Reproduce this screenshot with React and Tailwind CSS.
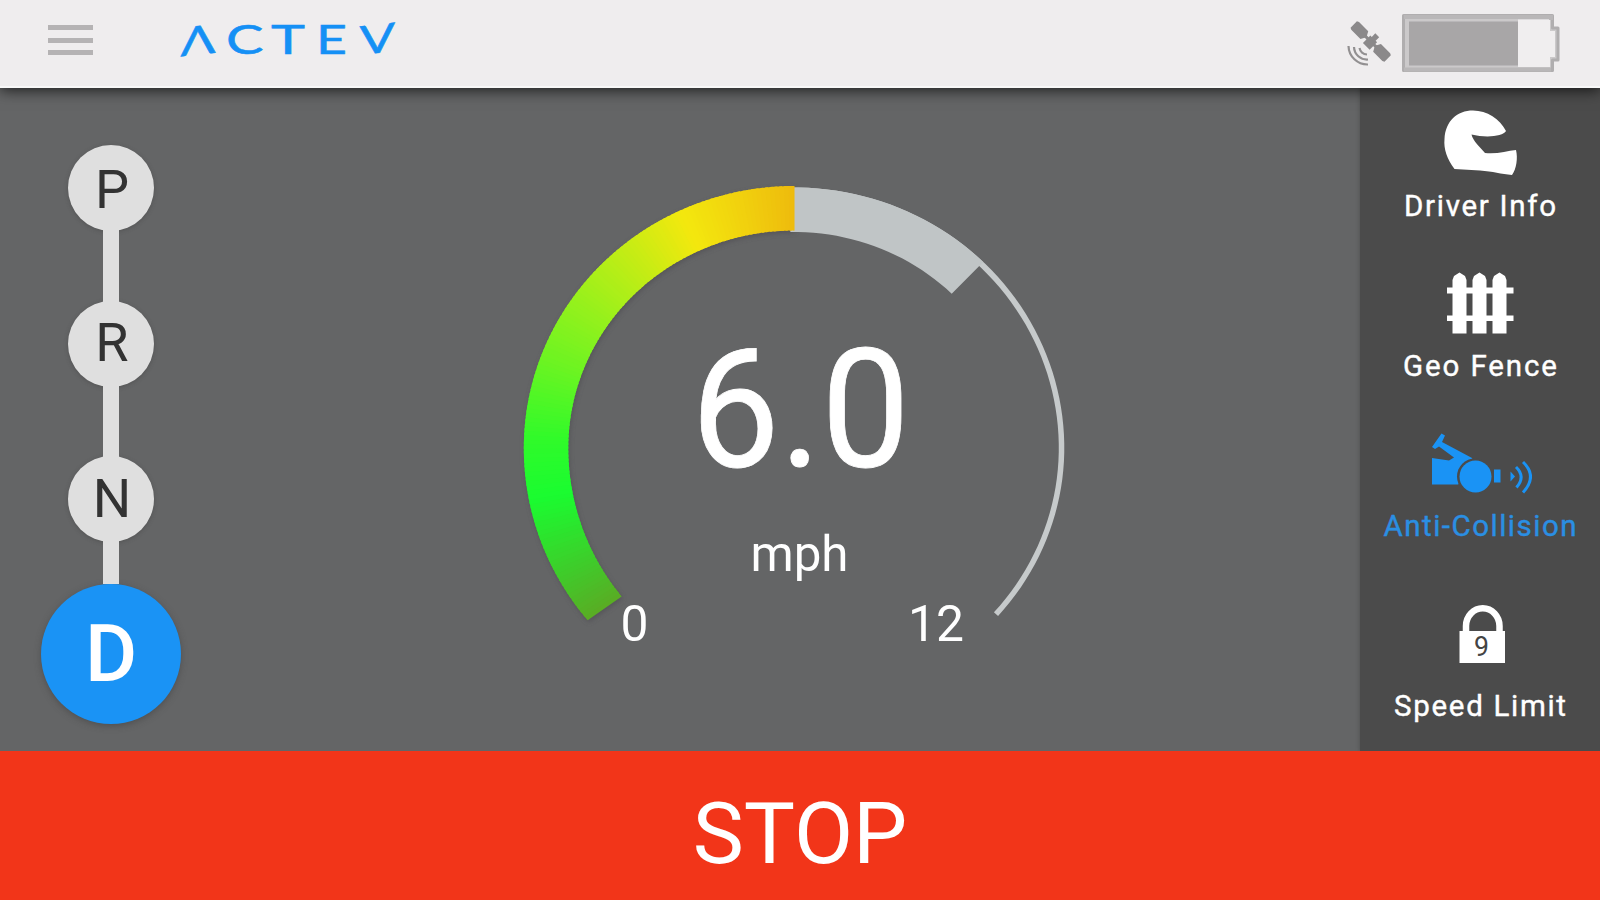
import React from "react";

const FONT = "font-['Roboto','Liberation_Sans',sans-serif]";

const CX = 794.3;
const CY = 448;

// Each ring edge has its own vertical radius above and below the centre line.
const COLOR_OUTER = { rx: 270.5, up: 262, down: 267 };
const COLOR_INNER = { rx: 226, up: 217.5, down: 230 };
const TRACK_OUTER = { rx: 270, up: 260.5, down: 256 };
const TRACK_INNER = { rx: 264.5, up: 254.5, down: 250.5 };
const SHADE_INNER = { rx: 225, up: 216, down: 216 };

function point(deg, e) {
  const a = (deg * Math.PI) / 180;
  const s = Math.sin(a);
  return `${(CX + e.rx * Math.cos(a)).toFixed(2)},${(CY + (s > 0 ? e.down : e.up) * s).toFixed(2)}`;
}

function band(a0, a1, outerEdge, innerEdge) {
  const steps = Math.max(2, Math.ceil((a1 - a0) / 2));
  const outer = [];
  const inner = [];
  for (let i = 0; i <= steps; i++) {
    const a = a0 + ((a1 - a0) * i) / steps;
    outer.push(point(a, outerEdge));
    inner.unshift(point(a, innerEdge));
  }
  return "M" + outer.concat(inner).join("L") + "Z";
}

const START = 139.8;

const STOPS = [
  [START, [90, 172, 36]],
  [150, [66, 200, 42]],
  [169, [26, 252, 48]],
  [182, [48, 250, 42]],
  [200, [108, 244, 34]],
  [217, [156, 240, 27]],
  [232, [200, 236, 20]],
  [245, [243, 232, 14]],
  [257, [241, 211, 14]],
  [270, [238, 187, 13]],
];

function colorAt(a) {
  for (let i = 1; i < STOPS.length; i++) {
    if (a <= STOPS[i][0]) {
      const [p, c] = STOPS[i - 1];
      const [q, d] = STOPS[i];
      const t = (a - p) / (q - p);
      return `rgb(${c.map((v, k) => Math.round(v + (d[k] - v) * t)).join(",")})`;
    }
  }
  return "rgb(238,187,13)";
}

const SLICES = Array.from({ length: 131 }, (_, i) => START + i);

function Gauge() {
  return (
    <svg width="1140" height="663" viewBox="220 88 1140 663" className={FONT}>
      <defs>
        <filter id="soft" x="-10%" y="-10%" width="120%" height="120%">
          <feGaussianBlur stdDeviation="2.5" />
        </filter>
      </defs>
      <path d={band(START, 270, COLOR_OUTER, COLOR_INNER)} fill="#4c4a50" opacity="0.6" filter="url(#soft)" transform="translate(1 2)" />
      <path d={band(269, 401, TRACK_OUTER, TRACK_INNER)} fill="#c6cacb" />
      <path d={band(269, 314.4, TRACK_OUTER, SHADE_INNER)} fill="#c0c5c6" />
      {SLICES.map((a) => (
        <path key={a} d={band(a, Math.min(a + 1.6, 270), COLOR_OUTER, COLOR_INNER)} fill={colorAt(a + 0.5)} />
      ))}
      <g fill="#fff">
        <text x="691" y="466" fontSize="165" textLength="219" lengthAdjust="spacingAndGlyphs" stroke="#fff" strokeWidth="0.8">6.0</text>
        <text x="750.5" y="571" fontSize="50" textLength="98" lengthAdjust="spacingAndGlyphs">mph</text>
        <text x="620.5" y="640.5" fontSize="50" textLength="28" lengthAdjust="spacingAndGlyphs">0</text>
        <text x="908" y="640.5" fontSize="50" textLength="56" lengthAdjust="spacingAndGlyphs">12</text>
      </g>
    </svg>
  );
}

function Logo() {
  return (
    <svg width="230" height="60" viewBox="170 10 230 60" aria-label="ACTEV" className="font-['Lato',sans-serif]">
      <g fill="#1590f5" stroke="#1590f5" strokeWidth="0.5" fontSize="40">
        <text transform="matrix(1 -0.11 0 1 180.500 56.500)" textLength="35" lengthAdjust="spacingAndGlyphs">Λ</text>
        <text x="226" y="53.500" textLength="37.500" lengthAdjust="spacingAndGlyphs">C</text>
        <text x="271" y="53.500" textLength="34" lengthAdjust="spacingAndGlyphs">T</text>
        <text x="316" y="53.500" textLength="31" lengthAdjust="spacingAndGlyphs">E</text>
        <text transform="matrix(1 -0.11 0 1 359.500 55)" textLength="35.500" lengthAdjust="spacingAndGlyphs">V</text>
      </g>
    </svg>
  );
}

function Satellite() {
  return (
    <svg width="46" height="48" viewBox="1346 21 46 48">
      <g transform="translate(1370.700 41.500) rotate(45)" fill="#8b898a">
        <path d="M-24 -4.500L-22 -5.500H-9L-6 0L-9 5.500H-22L-24 4.500ZM24 -4.500L22 -5.500H9L6 0L9 5.500H22L24 4.500Z" />
        <path d="M-4.500 -4H-2.500V-9H3V-4H5V6.500H-4.500Z" />
        <rect x="-8" y="-1.500" width="16" height="3" />
      </g>
      <g fill="none" stroke="#929091" strokeWidth="2.2">
        <path d="M1348.500 46A19 19 0 0 0 1368 64.500" />
        <path d="M1354 47A13 13 0 0 0 1368 59.500" />
        <path d="M1359.500 48A8 8 0 0 0 1367 54.500" />
      </g>
    </svg>
  );
}

function Battery() {
  return (
    <svg width="162" height="62" viewBox="1400 12 162 62">
      <path d="M1403.500 15.500H1552.500V28H1558V60H1552.500V70.500H1403.500Z" fill="#cbc9ca" stroke="#b0aeaf" strokeWidth="3" strokeLinejoin="round" />
      <path d="M1518 19.500H1550V31H1555V57H1550V67H1518Z" fill="#f0eeef" />
      <path d="M1404 17H1551V20M1404 69.500H1551" stroke="#b9b7b8" strokeWidth="4" fill="none" />
      <rect x="1409" y="21.500" width="109" height="44" fill="#a8a6a7" />
    </svg>
  );
}

function Helmet() {
  return (
    <svg width="80" height="70" viewBox="1440 108 80 70">
      <path d="M1454.500 169C1447 159 1443.500 149 1444.500 139C1445.500 121 1457 110.500 1473 110.500C1487 110.500 1500 119 1506 131C1503 136.500 1486 138 1471.500 134.500C1473 141 1480 147 1485 153C1496 154.500 1507 151 1516 150C1518 158 1516.500 169 1512 175C1501 174 1493 171.500 1480 170.500Z" fill="#fff" />
    </svg>
  );
}

function Fence() {
  return (
    <svg width="70" height="66" viewBox="1445 270 70 66">
      <g fill="#fff">
        <path d="M1447 287.500H1513.500V293.500H1447ZM1447 315.500H1513.500V321H1447Z" />
        <path d="M1452.500 333.500V280L1454 276L1459.500 272.500L1465 276L1466.500 280V333.500ZM1472.500 333.500V280L1474 276L1479.500 272.500L1485 276L1486.500 280V333.500ZM1492.500 333.500V280L1494 276L1499.500 272.500L1505 276L1506.500 280V333.500Z" />
      </g>
    </svg>
  );
}

function Collision() {
  return (
    <svg width="104" height="62" viewBox="1428 431 104 62">
      <g fill="#1a93f5">
        <path d="M1432 457L1449 459.500L1454 456.500L1439 445.500L1435 448L1432 446L1441.500 432.500L1445 434.500L1442 441L1472 457L1476 470L1458 483.500H1432Z" />
        <circle cx="1475" cy="475.500" r="18" fill="#4b4b4b" />
        <circle cx="1475.500" cy="475.500" r="16" />
        <rect x="1494" y="468.500" width="6.500" height="13" />
        <path d="M1510.500 470.500L1515 475.500L1510.500 480.500Z" />
      </g>
      <g fill="none" stroke="#1a93f5" strokeWidth="3">
        <path d="M1516 466Q1526 475.500 1516.500 486.500" />
        <path d="M1523 461Q1538 475 1523 491.500" />
      </g>
    </svg>
  );
}

function Lock() {
  return (
    <svg width="50" height="62" viewBox="1455 602 50 62" className={FONT}>
      <path d="M1466 632V626A16.700 17.700 0 0 1 1499.500 626V632" fill="none" stroke="#fff" strokeWidth="6.500" />
      <rect x="1459.500" y="631" width="46" height="32" fill="#fff" />
      <text x="1481.500" y="655.500" textAnchor="middle" fontSize="27" fill="#444" textLength="15" lengthAdjust="spacingAndGlyphs">9</text>
    </svg>
  );
}

function MenuItem({ icon, label, top, height, width, active }) {
  return (
    <button className={`flex w-full flex-col items-center justify-between ${top} ${height}`}>
      {icon}
      <svg width="220" height="34" className={`${FONT} shrink-0`}>
        <text x="110" y="25.500" textAnchor="middle" fontSize="29.500" textLength={width} fill={active ? "#2a8fe3" : "#fff"} stroke={active ? "#2a8fe3" : "#fff"} strokeWidth="0.4">{label}</text>
      </svg>
    </button>
  );
}

function Gear({ children, pad }) {
  return (
    <div className={`flex size-[86px] items-center justify-center rounded-full bg-[#dfdfdf] pl-0.5 text-[54px] leading-none text-[#333] shadow-[0_1px_4px_rgba(60,60,60,0.4)] ${pad}`}>
      {children}
    </div>
  );
}

function Link({ height }) {
  return <div className={`z-[1] -my-1 w-[16px] bg-[#dfdfdf] ${height}`} />;
}

export default function App() {
  return (
    <div className={`flex h-[900px] w-[1600px] flex-col overflow-hidden bg-[#646566] ${FONT}`}>
      <header className="z-10 flex h-[88px] shrink-0 items-start border-b-2 border-[#f8f8f8] bg-[#efedee] shadow-[0_2px_14px_rgba(0,0,0,0.75)]">
        <button className="mt-[25px] ml-[48px] flex w-[45px] flex-col gap-[7.5px]" aria-label="Menu">
          <span className="h-[5px] w-full bg-[#b5b3b4]" />
          <span className="h-[5px] w-full bg-[#b5b3b4]" />
          <span className="h-[5px] w-full bg-[#b5b3b4]" />
        </button>
        <div className="mt-[10px] ml-[77px]"><Logo /></div>
        <div className="mr-[38px] ml-auto flex gap-2">
          <div className="mt-[21px]"><Satellite /></div>
          <div className="mt-[12px]"><Battery /></div>
        </div>
      </header>
      <main className="flex h-[663px] shrink-0">
        <nav className="flex w-[220px] flex-col items-center pt-[57px] pl-[2px]">
          <Gear pad="pt-[3px]">P</Gear>
          <Link height="h-[78px]" />
          <Gear pad="pb-[2px]">R</Gear>
          <Link height="h-[77px]" />
          <Gear pad="pb-0">N</Gear>
          <div className="z-[1] -mt-1 h-[46px] w-[16px] bg-[#dfdfdf]" />
          <div className="flex size-[140px] items-center justify-center rounded-full bg-[#1a93f5] text-[80px] leading-none font-medium text-white shadow-[0_2px_6px_rgba(60,60,60,0.5)]">D</div>
        </nav>
        <Gauge />
        <aside className="flex w-[240px] flex-col bg-[#4b4b4b] shadow-[-1px_0_3px_rgba(75,75,75,0.6)]">
          <MenuItem icon={<Helmet />} label="Driver Info" width={152} top="mt-[20px]" height="h-[116px]" />
          <MenuItem icon={<Fence />} label="Geo Fence" width={154} top="mt-[46px]" height="h-[114px]" />
          <MenuItem icon={<Collision />} label="Anti-Collision" width={193} top="mt-[48px]" height="h-[112px]" active />
          <MenuItem icon={<Lock />} label="Speed Limit" width={172} top="mt-[58px]" height="h-[122px]" />
        </aside>
      </main>
      <footer className="flex h-[149px] shrink-0 items-center justify-center bg-[#f23519]">
        <button className="pt-4 text-[86px] leading-none text-white">STOP</button>
      </footer>
    </div>
  );
}
